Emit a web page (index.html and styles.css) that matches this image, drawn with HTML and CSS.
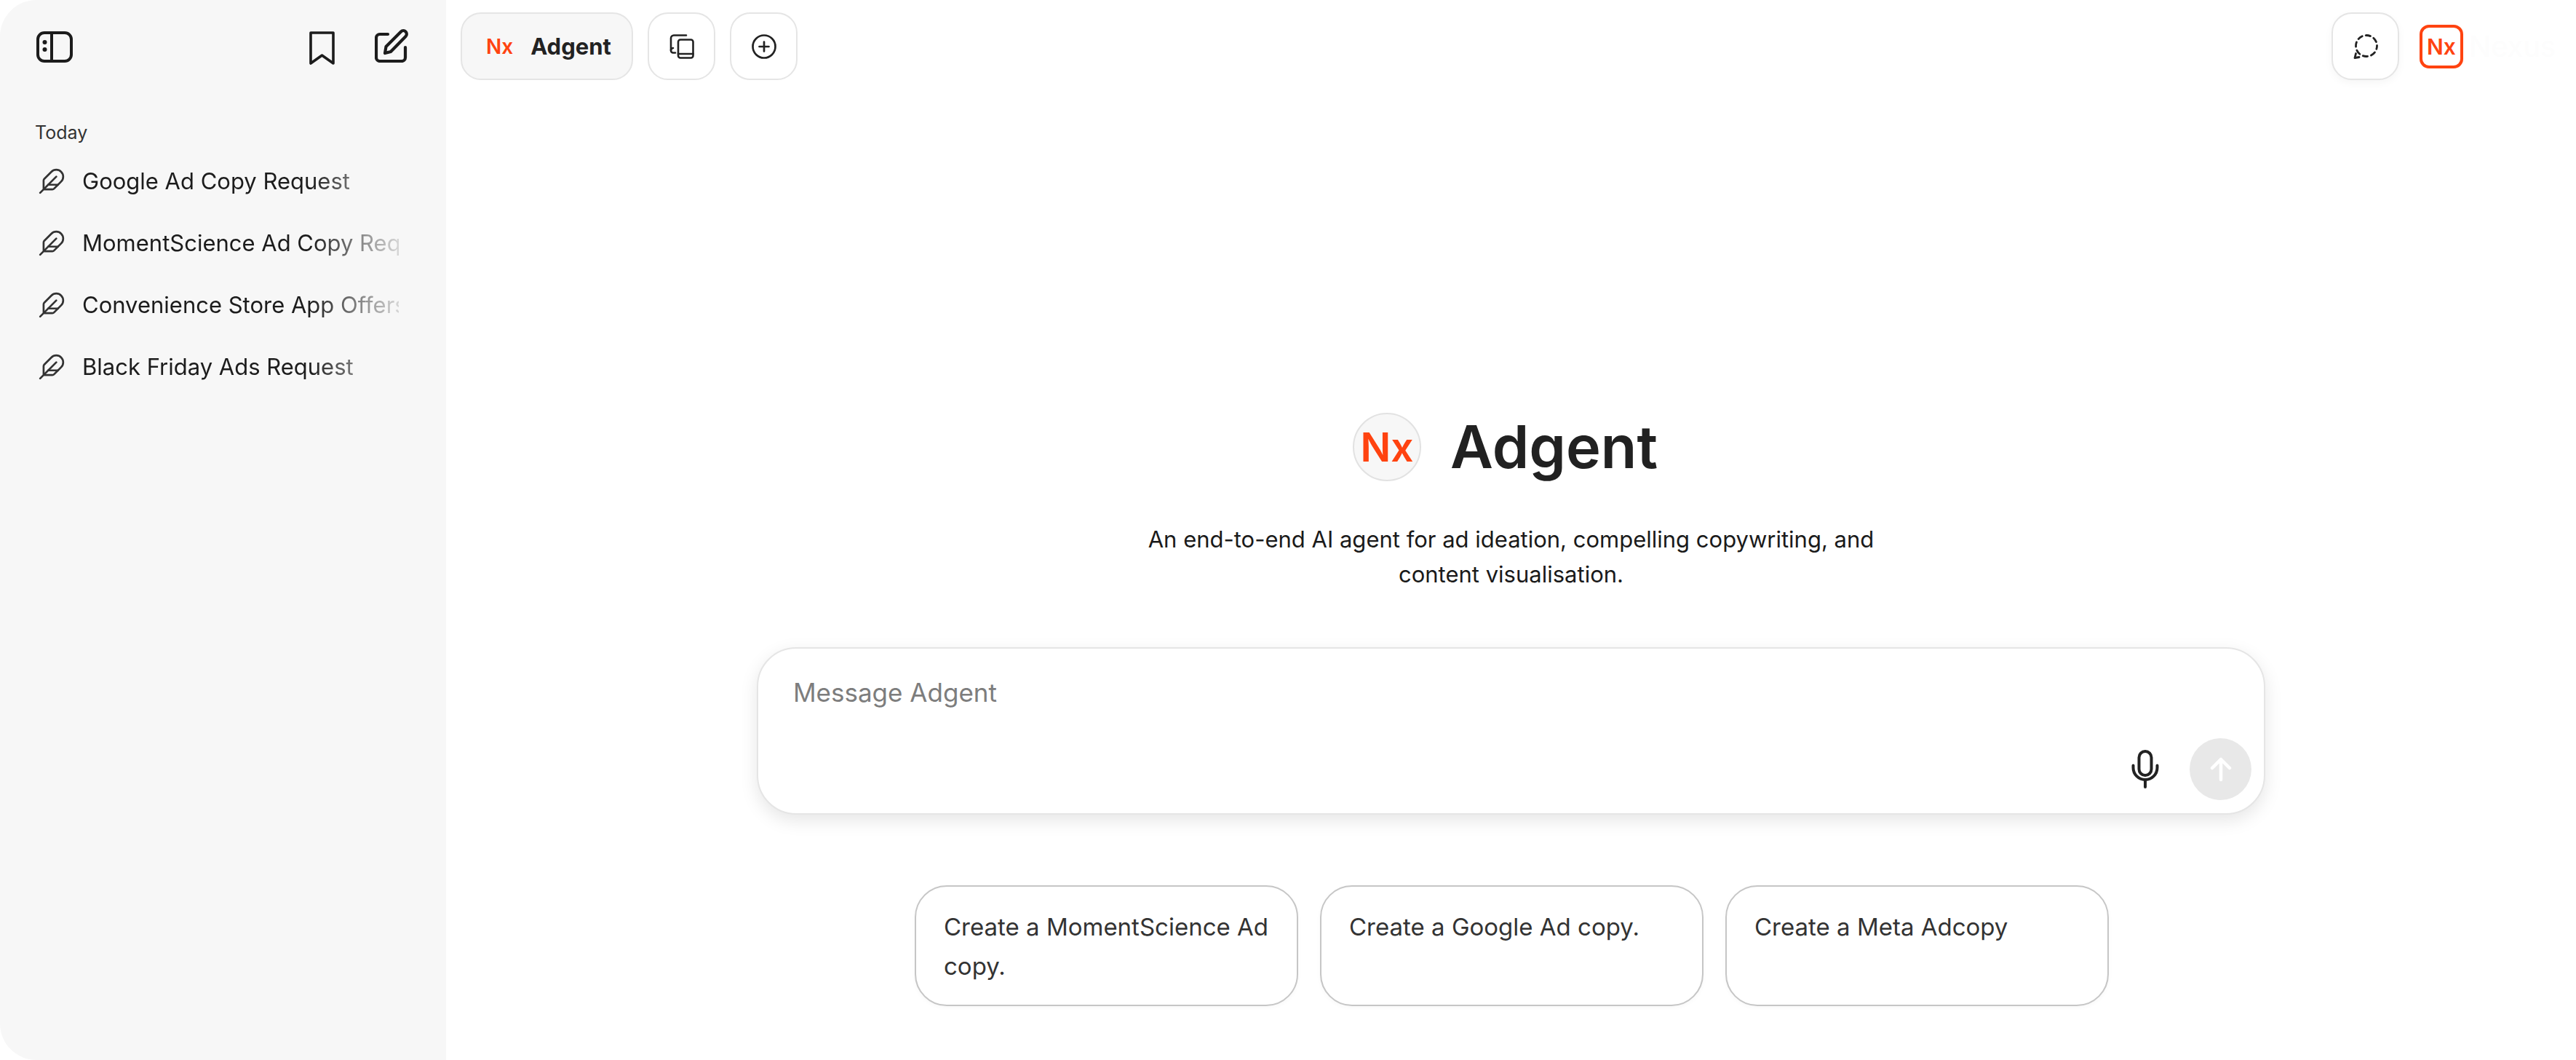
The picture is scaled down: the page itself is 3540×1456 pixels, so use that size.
FILE: index.html
```html
<!DOCTYPE html>
<html lang="en">
<head>
    <meta charset="UTF-8">
    <title>Adgent</title>
    <link rel="stylesheet" href="styles.css">
</head>
<body>
    <div class="app">
        <aside class="sidebar">
            <div class="sidebar-head">
                <svg class="icon-toggle" viewBox="0 0 50 43" fill="none" stroke="#1c1c1c" stroke-width="4">
                    <rect x="2" y="2" width="46" height="39" rx="9"/>
                    <path d="M21 2v39"/>
                    <circle cx="11.500" cy="15" r="3" fill="#1c1c1c" stroke="none"/>
                    <circle cx="11.500" cy="25" r="3" fill="#1c1c1c" stroke="none"/>
                </svg>
                <div class="head-right">
                    <svg class="icon-bookmark" viewBox="0 0 35 46" fill="none" stroke="#1c1c1c" stroke-width="3.600" stroke-linejoin="round">
                        <path d="M2 2h31v42L17.500 33 2 44z"/>
                    </svg>
                    <svg class="icon-edit" viewBox="0 0 46 46" fill="none" stroke="#1c1c1c" stroke-width="4.200" stroke-linecap="round" stroke-linejoin="round">
                        <path d="M18 7H7a5 5 0 0 0-5 5v27a5 5 0 0 0 5 5h30a5 5 0 0 0 5-5V25"/>
                        <path d="M14 33l1.500-9L36 3.500a4.500 4.500 0 0 1 6.500 6.500L22 31z"/>
                    </svg>
                </div>
            </div>
            <div class="today">Today</div>
            <div class="chat-row">
                <svg class="icon-feather" viewBox="0 0 24 24" fill="none" stroke="#333" stroke-width="1.700" stroke-linecap="round" stroke-linejoin="round">
                    <path d="M12.670 19a2 2 0 0 0 1.416-.588l6.154-6.172a6 6 0 0 0-8.490-8.490L5.586 9.914A2 2 0 0 0 5 11.328V18a1 1 0 0 0 1 1z"/>
                    <path d="M16 8 2 22"/><path d="M17.500 15H9"/>
                </svg>
                <span class="chat-title">Google Ad Copy Request</span>
            </div>
            <div class="chat-row">
                <svg class="icon-feather" viewBox="0 0 24 24" fill="none" stroke="#333" stroke-width="1.700" stroke-linecap="round" stroke-linejoin="round">
                    <path d="M12.670 19a2 2 0 0 0 1.416-.588l6.154-6.172a6 6 0 0 0-8.490-8.490L5.586 9.914A2 2 0 0 0 5 11.328V18a1 1 0 0 0 1 1z"/>
                    <path d="M16 8 2 22"/><path d="M17.500 15H9"/>
                </svg>
                <span class="chat-title">MomentScience Ad Copy Request</span>
            </div>
            <div class="chat-row">
                <svg class="icon-feather" viewBox="0 0 24 24" fill="none" stroke="#333" stroke-width="1.700" stroke-linecap="round" stroke-linejoin="round">
                    <path d="M12.670 19a2 2 0 0 0 1.416-.588l6.154-6.172a6 6 0 0 0-8.490-8.490L5.586 9.914A2 2 0 0 0 5 11.328V18a1 1 0 0 0 1 1z"/>
                    <path d="M16 8 2 22"/><path d="M17.500 15H9"/>
                </svg>
                <span class="chat-title">Convenience Store App Offers</span>
            </div>
            <div class="chat-row">
                <svg class="icon-feather" viewBox="0 0 24 24" fill="none" stroke="#333" stroke-width="1.700" stroke-linecap="round" stroke-linejoin="round">
                    <path d="M12.670 19a2 2 0 0 0 1.416-.588l6.154-6.172a6 6 0 0 0-8.490-8.490L5.586 9.914A2 2 0 0 0 5 11.328V18a1 1 0 0 0 1 1z"/>
                    <path d="M16 8 2 22"/><path d="M17.500 15H9"/>
                </svg>
                <span class="chat-title">Black Friday Ads Request</span>
            </div>
        </aside>

        <main class="main">
            <div class="topbar">
                <div class="topbar-left">
                    <div class="tool-btn agent-pill">
                        <span class="pill-nx">Nx</span>
                        <span class="pill-name">Adgent</span>
                    </div>
                    <div class="tool-btn">
                        <svg class="icon-tool" viewBox="0 0 34 34" fill="none" stroke="#222" stroke-width="2.600" stroke-linecap="round" stroke-linejoin="round">
                            <path d="M23 1.500H6a4 4 0 0 0-4 4v17a3 3 0 0 0 3 3h3"/>
                            <path d="M5 19a3 3 0 0 0-3 3"/>
                            <rect x="12" y="7.500" width="20.500" height="25" rx="3"/>
                            <path d="M12 27h20.500"/>
                        </svg>
                    </div>
                    <div class="tool-btn">
                        <svg class="icon-tool" viewBox="0 0 34 34" fill="none" stroke="#222" stroke-width="2.700" stroke-linecap="round">
                            <circle cx="17" cy="17" r="15.500"/>
                            <path d="M17 10.500v13M10.500 17h13"/>
                        </svg>
                    </div>
                </div>
                <div class="topbar-right">
                    <div class="tool-btn tool-btn-shadow">
                        <svg class="icon-tool" viewBox="0 0 34 34" fill="none" stroke="#222" stroke-width="2.800" stroke-linecap="round" stroke-linejoin="round">
                            <circle cx="18" cy="16" r="14.500" stroke-dasharray="6.500 5" stroke-dashoffset="2"/>
                            <path d="M2 32.500l1.500-6M2 32.500l6-1"/>
                        </svg>
                    </div>
                    <div class="brand-nx">Nx</div>
                    <div class="brand-ghost">Nexus</div>
                </div>
            </div>

            <section class="hero">
                <div class="hero-title">
                    <div class="hero-logo">Nx</div>
                    <h1>Adgent</h1>
                </div>
                <p class="hero-desc">An end-to-end AI agent for ad ideation, compelling copywriting, and<br>content visualisation.</p>

                <div class="composer">
                    <div class="composer-text">Message Adgent</div>
                    <div class="composer-actions">
                        <svg class="icon-mic" viewBox="0 0 38 53" fill="none" stroke="#222" stroke-width="4" stroke-linecap="round">
                            <rect x="10.500" y="2" width="17" height="33" rx="8.500"/>
                            <path d="M2.500 21.500v3a16.500 16.500 0 0 0 33 0v-3"/>
                            <path d="M19 41v10"/>
                        </svg>
                        <div class="send-btn">
                            <svg class="icon-arrow" viewBox="0 0 30 34" fill="none" stroke="#fff" stroke-width="4.500" stroke-linecap="round" stroke-linejoin="round">
                                <path d="M15 31V3M3 15 15 3l12 12"/>
                            </svg>
                        </div>
                    </div>
                </div>

                <div class="chips">
                    <div class="chip">Create a MomentScience Ad copy.</div>
                    <div class="chip">Create a Google Ad copy.</div>
                    <div class="chip">Create a Meta Adcopy</div>
                </div>
            </section>
        </main>
    </div>
</body>
</html>
```

FILE: styles.css
```css
* {
    box-sizing: border-box;
}
html, body {
    margin: 0;
    padding: 0;
    height: 100%;
    background: white;
    overflow: hidden;
}
body {
    font-family: 'Inter', 'Liberation Sans', sans-serif;
    color: #1c1c1c;
}
.app {
    display: flex;
    height: 1456px;
}

/* sidebar */
.sidebar {
    width: 613px;
    flex-shrink: 0;
    background-color: #f7f7f7;
    border-top-left-radius: 50px;
    border-bottom-left-radius: 50px;
    padding: 40px 52px 0 48px;
}
.sidebar-head {
    display: flex;
    justify-content: space-between;
    align-items: flex-start;
    height: 48px;
    padding-left: 2px;
}
.head-right {
    display: flex;
    align-items: flex-start;
    gap: 55px;
}
.icon-toggle {
    width: 50px;
    height: 43px;
    margin-top: 3px;
}
.icon-bookmark {
    width: 35px;
    height: 46px;
    margin-top: 3px;
}
.icon-edit {
    width: 46px;
    height: 46px;
}
.today {
    margin-top: 78px;
    font-size: 25px;
    line-height: 32px;
    color: #333;
}
.today + .chat-row {
    margin-top: 8px;
}
.chat-row {
    display: flex;
    align-items: center;
    height: 85px;
    padding-left: 4px;
    gap: 23px;
}
.icon-feather {
    width: 38px;
    height: 38px;
    flex-shrink: 0;
}
.chat-title {
    width: 435px;
    font-size: 31px;
    white-space: nowrap;
    overflow: hidden;
    -webkit-mask-image: linear-gradient(to right, black 72%, rgba(0, 0, 0, 0.15) 100%);
    mask-image: linear-gradient(to right, black 72%, rgba(0, 0, 0, 0.15) 100%);
}

/* top bar */
.main {
    flex: 1;
    min-width: 0;
    display: flex;
    flex-direction: column;
}
.topbar {
    display: flex;
    justify-content: space-between;
    padding: 17px 0 0 20px;
}
.topbar-left {
    display: flex;
    gap: 20px;
}
.topbar-right {
    display: flex;
    align-items: center;
}
.tool-btn {
    width: 93px;
    height: 93px;
    border: 2px solid #e5e5e5;
    border-radius: 28px;
    background: white;
    display: flex;
    align-items: center;
    justify-content: center;
}
.tool-btn-shadow {
    box-shadow: 0 4px 12px rgba(0, 0, 0, 0.04);
}
.agent-pill {
    width: 237px;
    background-color: #f7f7f7;
    justify-content: flex-start;
    padding-left: 33px;
    gap: 24px;
}
.pill-nx {
    font-size: 28px;
    font-weight: 600;
    color: #ff4310;
}
.pill-name {
    font-size: 31px;
    font-weight: 700;
    color: #222;
}
.icon-tool {
    width: 34px;
    height: 34px;
}
.brand-nx {
    width: 60px;
    height: 60px;
    margin-left: 28px;
    border: 4px solid #ff4310;
    border-radius: 13px;
    display: flex;
    align-items: center;
    justify-content: center;
    font-size: 30px;
    font-weight: 600;
    color: #ff4310;
}
.brand-ghost {
    width: 155px;
    padding-left: 8px;
    font-size: 40px;
    color: #fdfdfd;
}

/* centre content */
.hero {
    display: flex;
    flex-direction: column;
    align-items: center;
    margin-top: 457px;
}
.hero-title {
    display: flex;
    align-items: center;
    gap: 40px;
    margin-right: 16px;
}
.hero-logo {
    width: 94px;
    height: 94px;
    border: 2.500px solid #e2e2e2;
    border-radius: 50%;
    background-color: #f7f7f7;
    display: flex;
    align-items: center;
    justify-content: center;
    font-size: 55px;
    font-weight: 600;
    color: #ff4310;
}
h1 {
    margin: 0;
    font-size: 81px;
    line-height: 94px;
    font-weight: 600;
    color: #212121;
}
.hero-desc {
    margin: 56px 0 0;
    font-size: 31px;
    line-height: 48px;
    text-align: center;
    color: #1a1a1a;
}
.composer {
    width: 2073px;
    height: 230px;
    margin-top: 76px;
    padding: 38px 17px 18px 48px;
    border: 2px solid #e5e5e5;
    border-radius: 54px;
    background: white;
    box-shadow: 0 8px 24px rgba(0, 0, 0, 0.1);
    display: flex;
    flex-direction: column;
    justify-content: space-between;
}
.composer-text {
    font-size: 35px;
    line-height: 44px;
    color: #7d7d7d;
}
.composer-actions {
    display: flex;
    justify-content: flex-end;
    align-items: center;
    gap: 42px;
}
.icon-mic {
    width: 38px;
    height: 53px;
}
.send-btn {
    width: 85px;
    height: 85px;
    border-radius: 50%;
    background-color: #e8e8e8;
    display: flex;
    align-items: center;
    justify-content: center;
}
.icon-arrow {
    width: 30px;
    height: 34px;
}
.chips {
    display: flex;
    gap: 30px;
    margin-top: 97px;
    margin-left: 2px;
}
.chip {
    width: 527px;
    height: 166px;
    padding: 28px 38px;
    border: 2px solid #c6c6c6;
    border-radius: 44px;
    background: white;
    font-size: 33px;
    line-height: 54px;
    color: #333;
    box-shadow: 0 2px 6px rgba(0, 0, 0, 0.03);
}
```
